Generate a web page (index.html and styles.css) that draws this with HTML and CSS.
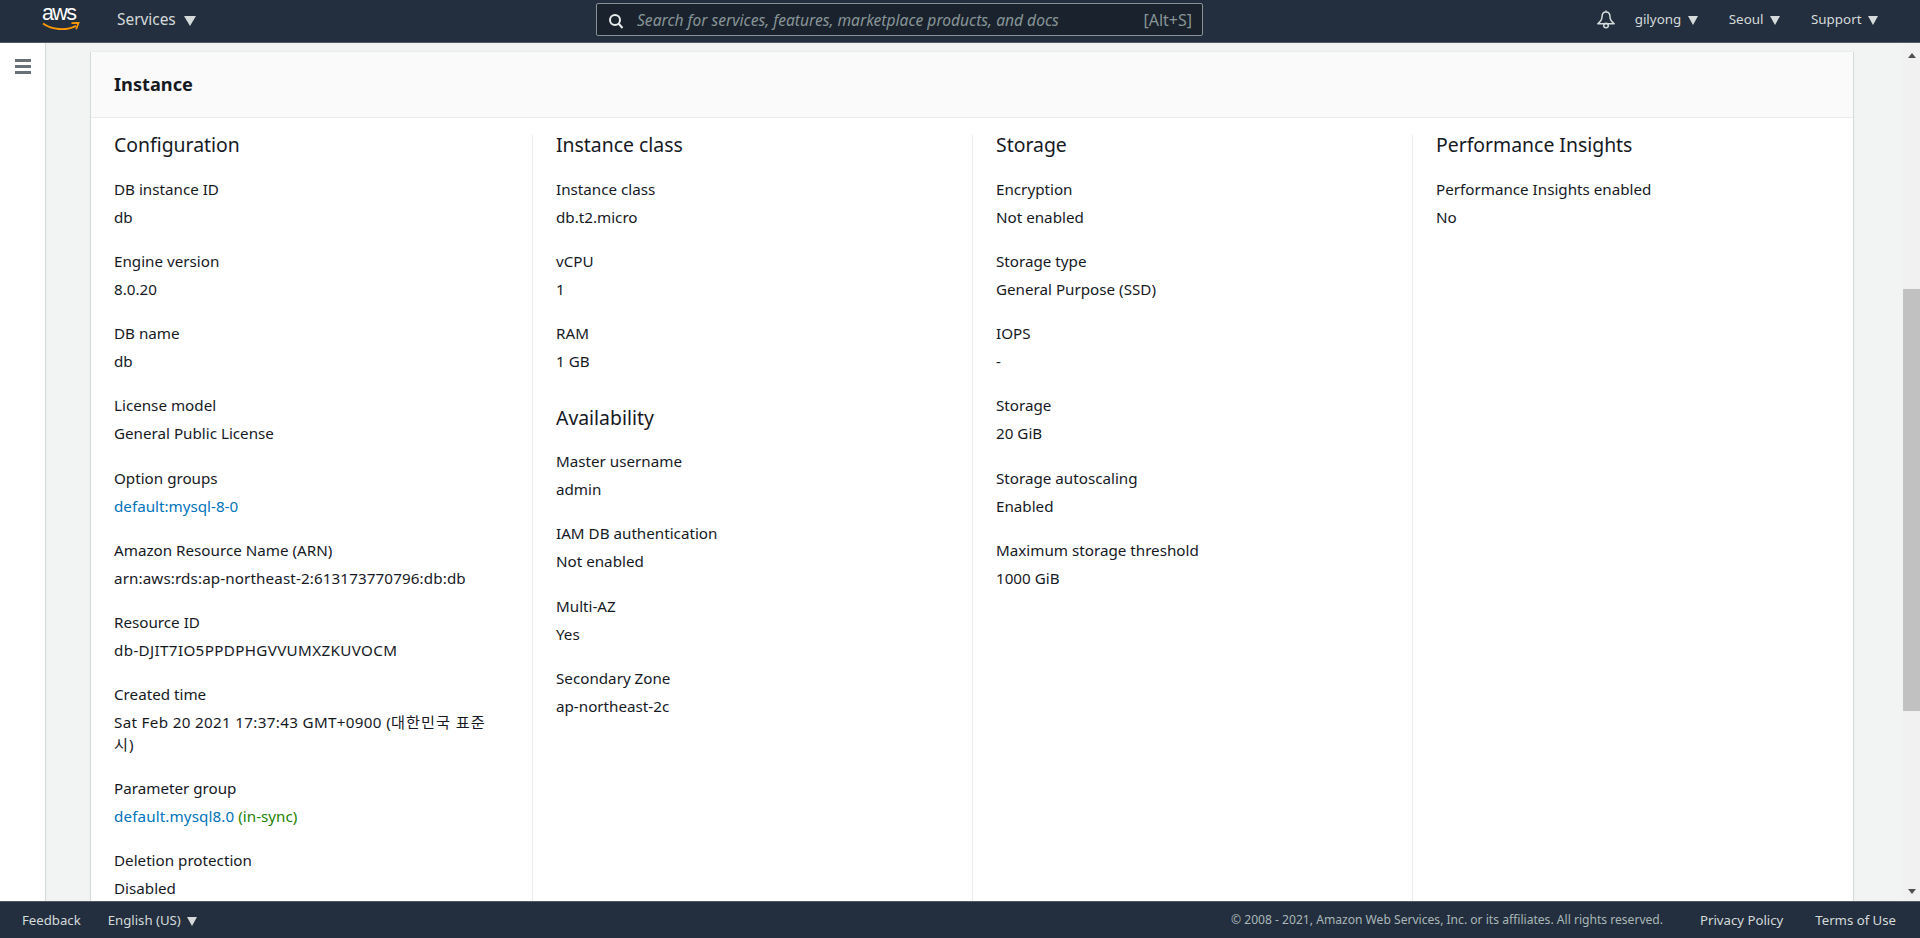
FILE: index.html
```html
<!DOCTYPE html>
<html lang="en">
<head>
<meta charset="utf-8">
<title>RDS Instance</title>
<link rel="stylesheet" href="styles.css">
</head>
<body>
<header class="topbar">
  <a class="logo">
    <span class="logo-text">aws</span>
    <svg class="logo-smile" width="38" height="10" viewBox="0 0 38 10"><path d="M1 1.5C10 8 24 9 34 3.8" fill="none" stroke="#f90" stroke-width="1.9"/><path d="M29.5 1.2L36.6 .8L34.2 7.2" fill="none" stroke="#f90" stroke-width="1.7"/></svg>
  </a>
  <div class="nav-item services">Services <span class="caret"></span></div>
  <div class="search">
    <svg class="search-icon" width="16" height="16" viewBox="0 0 16 16"><circle cx="7" cy="7" r="5" fill="none" stroke="#eaeded" stroke-width="2"/><path d="M10.5 10.5L14.5 15" stroke="#eaeded" stroke-width="2"/></svg>
    <span class="search-text">Search for services, features, marketplace products, and docs</span>
    <span class="search-key">[Alt+S]</span>
  </div>
  <div class="top-right">
    <svg class="bell" width="20" height="20" viewBox="0 0 20 20"><path d="M10 1.500V3M10 3C7 3 6 5.500 6 8C6 10.500 4.500 12.500 1.800 14.800H18.200C15.500 12.500 14 10.500 14 8C14 5.500 13 3 10 3Z" fill="none" stroke="#d5dbdb" stroke-width="1.500" stroke-linejoin="round"/><circle cx="10" cy="16.500" r="2.300" fill="none" stroke="#d5dbdb" stroke-width="1.500"/></svg>
    <div class="nav-item">gilyong <span class="caret"></span></div>
    <div class="nav-item">Seoul <span class="caret"></span></div>
    <div class="nav-item">Support <span class="caret"></span></div>
  </div>
</header>

<div class="middle">
  <aside class="sidenav">
    <div class="burger"><span></span><span></span><span></span></div>
  </aside>
  <main class="content">
    <section class="card">
      <div class="card-head">Instance</div>
      <div class="card-body">
        <div class="col">
          <h3>Configuration</h3>
          <dl>
            <div class="kv"><dt>DB instance ID</dt><dd>db</dd></div>
            <div class="kv"><dt>Engine version</dt><dd>8.0.20</dd></div>
            <div class="kv"><dt>DB name</dt><dd>db</dd></div>
            <div class="kv"><dt>License model</dt><dd>General Public License</dd></div>
            <div class="kv"><dt>Option groups</dt><dd><a class="link">default:mysql-8-0</a></dd></div>
            <div class="kv"><dt>Amazon Resource Name (ARN)</dt><dd class="digits">arn:aws:rds:ap-northeast-2:613173770796:db:db</dd></div>
            <div class="kv"><dt>Resource ID</dt><dd class="caps">db-DJIT7IO5PPDPHGVVUMXZKUVOCM</dd></div>
            <div class="kv"><dt>Created time</dt><dd class="time">Sat Feb 20 2021 17:37:43 GMT+0900 (<span class="ko">대한민국 표준시</span>)</dd></div>
            <div class="kv"><dt>Parameter group</dt><dd><a class="link digits">default.mysql8.0</a> <span class="ok">(in-sync)</span></dd></div>
            <div class="kv"><dt>Deletion protection</dt><dd>Disabled</dd></div>
          </dl>
        </div>
        <div class="col">
          <h3>Instance class</h3>
          <dl>
            <div class="kv"><dt>Instance class</dt><dd>db.t2.micro</dd></div>
            <div class="kv"><dt>vCPU</dt><dd>1</dd></div>
            <div class="kv"><dt>RAM</dt><dd>1 GB</dd></div>
          </dl>
          <h3 class="sub">Availability</h3>
          <dl>
            <div class="kv"><dt>Master username</dt><dd>admin</dd></div>
            <div class="kv"><dt>IAM DB authentication</dt><dd>Not enabled</dd></div>
            <div class="kv"><dt>Multi-AZ</dt><dd>Yes</dd></div>
            <div class="kv"><dt>Secondary Zone</dt><dd>ap-northeast-2c</dd></div>
          </dl>
        </div>
        <div class="col">
          <h3>Storage</h3>
          <dl>
            <div class="kv"><dt>Encryption</dt><dd>Not enabled</dd></div>
            <div class="kv"><dt>Storage type</dt><dd>General Purpose (SSD)</dd></div>
            <div class="kv"><dt>IOPS</dt><dd>-</dd></div>
            <div class="kv"><dt>Storage</dt><dd>20 GiB</dd></div>
            <div class="kv"><dt>Storage autoscaling</dt><dd>Enabled</dd></div>
            <div class="kv"><dt>Maximum storage threshold</dt><dd>1000 GiB</dd></div>
          </dl>
        </div>
        <div class="col">
          <h3>Performance Insights</h3>
          <dl>
            <div class="kv"><dt>Performance Insights enabled</dt><dd>No</dd></div>
          </dl>
        </div>
      </div>
    </section>
  </main>
  <div class="scrollbar">
    <span class="arrow-up"></span>
    <span class="thumb"></span>
    <span class="arrow-down"></span>
  </div>
</div>

<footer class="bottombar">
  <span class="foot-link feedback">Feedback</span>
  <span class="foot-link">English (US) <span class="caret"></span></span>
  <span class="copyright">© 2008 - 2021, Amazon Web Services, Inc. or its affiliates. All rights reserved.</span>
  <span class="foot-link privacy">Privacy Policy</span>
  <span class="foot-link terms">Terms of Use</span>
</footer>
</body>
</html>
```
FILE: styles.css
```css
* { box-sizing: border-box; }
html, body { margin: 0; height: 100%; overflow: hidden; }
body {
  display: flex;
  flex-direction: column;
  height: 938px;
  font-family: "Noto Sans", "Noto Sans CJK KR", sans-serif;
  font-size: 15.2px;
  line-height: 22px;
  color: #16191f;
  background: #f2f3f3;
}

.topbar {
  flex: none;
  height: 43px;
  display: flex;
  align-items: center;
  background: #232f3e;
  border-bottom: 1px solid #545b64;
  color: #d5dbdb;
}
.logo {
  width: 117px;
  height: 43px;
  padding: 3px 0 0 42px;
  display: flex;
  flex-direction: column;
}
.logo-text {
  font-family: "Liberation Sans", sans-serif;
  font-size: 21.5px;
  line-height: 20px;
  color: #fff;
  letter-spacing: -1.6px;
}
.logo-smile { margin-top: -1px; }
.nav-item { white-space: nowrap; line-height: 20px; }
.services { width: 479px; font-size: 15.4px; margin-top: -3px; }
.services .caret {
  margin-left: 4px;
  border-left-width: 6px;
  border-right-width: 6px;
  border-top-width: 10px;
}
.caret {
  display: inline-block;
  width: 0;
  height: 0;
  margin-left: 3px;
  border-left: 5.5px solid transparent;
  border-right: 5.5px solid transparent;
  border-top: 9px solid #d5dbdb;
  vertical-align: -1px;
}
.search {
  width: 607px;
  height: 33px;
  margin-top: -3px;
  display: flex;
  align-items: center;
  padding: 0 10px 0 11px;
  background: #1a222d;
  border: 1px solid #879196;
  border-radius: 2px;
}
.search-icon { flex: none; margin: 3px 13px 0 0; }
.search-text {
  flex: 1;
  font-style: italic;
  color: #879596;
  font-size: 15.6px;
  white-space: nowrap;
}
.search-key { color: #879596; font-size: 16px; }
.top-right {
  margin-left: auto;
  display: flex;
  align-items: center;
  padding-right: 42px;
  height: 38px;
  margin-top: -5px;
  font-size: 13.4px;
}
.bell { margin-right: 19px; }
.top-right .nav-item { margin-right: 31px; }
.top-right .nav-item:last-child { margin-right: 0; }

.middle { flex: 1; min-height: 0; display: flex; }
.sidenav {
  flex: none;
  width: 46px;
  background: #fff;
  border-right: 1px solid #d5dbdb;
}
.burger { padding: 16px 0 0 15px; }
.burger span { display: block; width: 16px; height: 2.5px; margin-bottom: 3.5px; background: #687078; }
.content { flex: 1; min-width: 0; overflow: hidden; padding: 9px 50px 0 45px; }
.card {
  background: #fff;
  box-shadow: -1px 0 0 #d5dbdb, 1px 0 0 #d5dbdb, 0 -1px 1px #eaeded;
}
.card-head {
  height: 66px;
  padding: 21px 23px 0;
  background: #fafafa;
  border-bottom: 1px solid #eaeded;
  font-size: 18.2px;
  font-weight: 700;
}
.card-body {
  display: grid;
  grid-template-columns: 441px 440px 440px 1fr;
  height: 900px;
  padding-top: 17px;
}
.col { padding: 0 40px 0 23px; border-left: 1px solid #eaeded; }
.col:first-child { border-left: 0; padding-left: 23px; }
h3 { margin: 0 0 23px; font-size: 19.4px; font-weight: 400; line-height: 20px; }
h3.sub { margin-top: 36px; margin-bottom: 22px; }
dl { margin: 0; }
.kv { margin-bottom: 22.15px; }
dt { margin: 0 0 6px; }
dd { margin: 0; }
.digits { letter-spacing: .12px; }
.caps { letter-spacing: .35px; }
.time { letter-spacing: .33px; }
.ko { font-size: 15.2px; letter-spacing: 1px; }
.link { color: #0073bb; }
.ok { color: #1d8102; }

.scrollbar {
  flex: none;
  width: 17px;
  background: #f1f1f1;
  display: flex;
  flex-direction: column;
  align-items: center;
}
.arrow-up { margin-top: 10px; border: 4.500px solid transparent; border-top: 0; border-bottom: 5px solid #505050; }
.thumb { width: 17px; height: 422px; margin-top: 231px; background: #c1c1c1; }
.arrow-down { margin-top: auto; margin-bottom: 7px; border: 4.500px solid transparent; border-bottom: 0; border-top: 5px solid #505050; }

.bottombar {
  flex: none;
  height: 37px;
  display: flex;
  align-items: center;
  padding: 0 24px 0 22px;
  background: #232f3e;
  border-top: 1px solid #545b64;
  color: #d5dbdb;
  font-size: 13.2px;
}
.feedback { margin-right: 27px; }
.copyright { margin-left: auto; font-size: 12.1px; color: #aab7b8; margin-right: 1px; }
.privacy { margin-left: 36px; }
.terms { margin-left: 32px; }
```
